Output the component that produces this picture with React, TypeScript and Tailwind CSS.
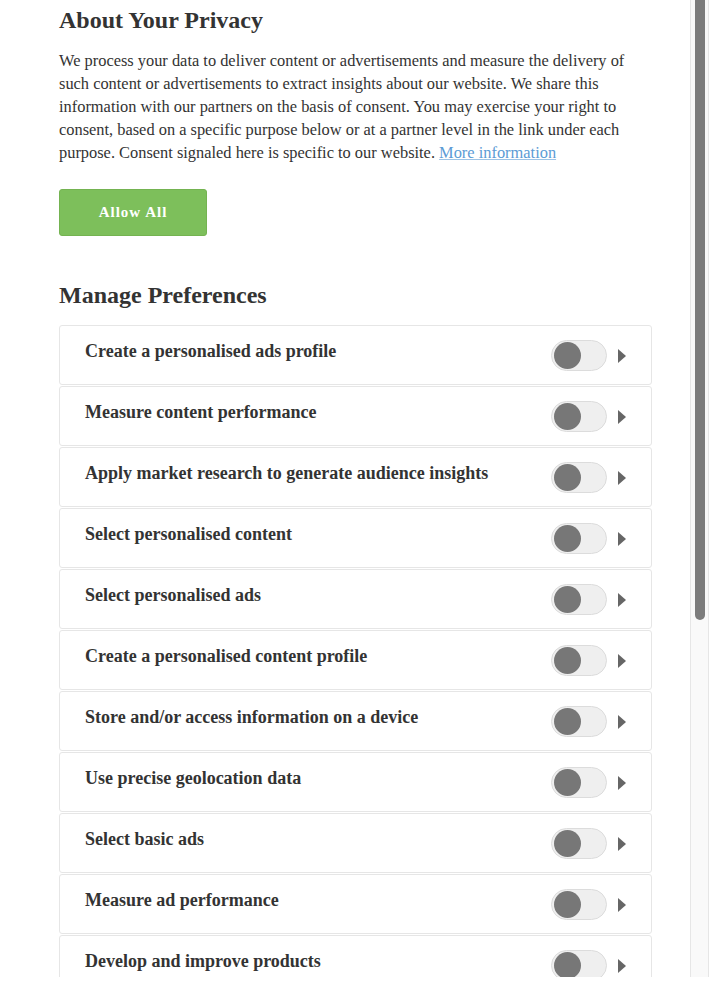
import { useState } from "react";

const purposes = [
  "Create a personalised ads profile",
  "Measure content performance",
  "Apply market research to generate audience insights",
  "Select personalised content",
  "Select personalised ads",
  "Create a personalised content profile",
  "Store and/or access information on a device",
  "Use precise geolocation data",
  "Select basic ads",
  "Measure ad performance",
  "Develop and improve products",
];

function Toggle({ on, onClick }: { on: boolean; onClick: () => void }) {
  return (
    <button
      type="button"
      onClick={onClick}
      className={`relative flex h-[31px] w-[56px] shrink-0 items-center rounded-full border border-[#dcdcdc] px-[2px] ${
        on ? "justify-end bg-[#7dbf5b]" : "justify-start bg-[#efefef]"
      }`}
    >
      <span className="h-[27px] w-[27px] rounded-full bg-[#777777]" />
    </button>
  );
}

function PurposeRow({ label }: { label: string }) {
  const [on, setOn] = useState(false);
  return (
    <div className="flex h-[60px] items-start justify-between rounded-[3px] border border-[#e6e6e6] bg-white pl-[25px] pr-[24px]">
      <span className="pt-[14px] text-[18px] font-bold leading-[22px] text-[#333]">{label}</span>
      <div className="flex items-center gap-[11px] pt-[14px]">
        <Toggle on={on} onClick={() => setOn(!on)} />
        <svg width="9" height="14" viewBox="0 0 9 14" className="text-[#666]">
          <path d="M0 0 L8 7 L0 14 Z" fill="currentColor" />
        </svg>
      </div>
    </div>
  );
}

export default function App() {
  return (
    <div
      className="flex h-[1000px] w-[712px] items-start bg-white"
      style={{ fontFamily: '"Liberation Serif", "Times New Roman", serif' }}
    >
      <div className="flex h-[977px] w-full">
        <main className="h-full w-[690px] overflow-hidden pl-[59px] pr-[38px] text-[#333]">
          <h1 className="mt-[5px] text-[24px] font-bold leading-[30px]">About Your Privacy</h1>
          <p className="mt-[14px] text-[16.4px] leading-[23px]">
            We process your data to deliver content or advertisements and measure the delivery of
            such content or advertisements to extract insights about our website. We share this
            information with our partners on the basis of consent. You may exercise your right to
            consent, based on a specific purpose below or at a partner level in the link under each
            purpose. Consent signaled here is specific to our website.{" "}
            <a href="#" className="text-[#5b9bd5] underline decoration-[#9cc3e6]">
              More information
            </a>
          </p>

          <button
            type="button"
            className="mt-[25px] h-[47px] w-[148px] rounded-[3px] border border-[#74b351] bg-[#7dbf5b] text-[15px] font-bold tracking-[1px] text-white"
          >
            Allow All
          </button>

          <h2 className="mt-[44px] text-[24px] font-bold leading-[30px]">Manage Preferences</h2>

          <div className="mt-[15px] flex flex-col gap-px">
            {purposes.map((p) => (
              <PurposeRow key={p} label={p} />
            ))}
          </div>
        </main>

        <div className="flex w-[19px] justify-center border-x border-[#e6e6e6] bg-[#f9f9f9]">
          <div className="h-[620px] w-[10px] rounded-b-full bg-[#7c7c7c]" />
        </div>
      </div>
    </div>
  );
}
